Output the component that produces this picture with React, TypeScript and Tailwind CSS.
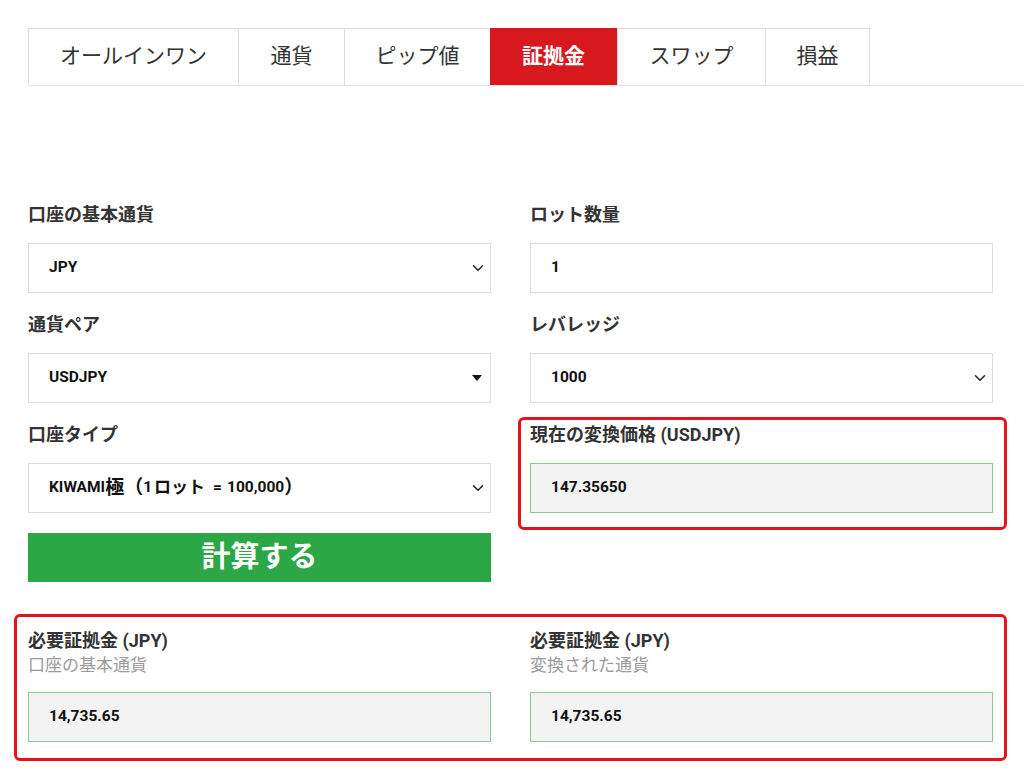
import { ChevronDown } from 'lucide-react';

const tabs = ['オールインワン', '通貨', 'ピップ値', '証拠金', 'スワップ', '損益'];
const tabWidths = ['w-[210px]', 'w-[106px]', 'w-[146px]', 'w-[127px]', 'w-[148px]', 'w-[105px]'];

const font = { fontFamily: 'Roboto, "Noto Sans CJK JP", sans-serif' };

function Label({ children }: { children: React.ReactNode }) {
  return <div className="h-6 mb-4 text-[18px] leading-6 font-bold text-[#333]">{children}</div>;
}

function Box({
  children,
  icon,
  readOnly,
}: {
  children: React.ReactNode;
  icon?: 'chevron' | 'caret';
  readOnly?: boolean;
}) {
  return (
    <div
      className={
        'h-[50px] flex items-center justify-between pl-5 pr-[3px] text-[15.5px] font-bold text-[#111] border ' +
        (readOnly ? 'bg-[#f3f3f3] border-[#8cc796]' : 'bg-white border-[#dcdcdc]')
      }
    >
      <span className="flex items-center">{children}</span>
      {icon === 'chevron' && <ChevronDown size={18} strokeWidth={2} className="text-[#222]" />}
      {icon === 'caret' && (
        <svg width="12" height="8" viewBox="0 0 12 8" className="mr-1">
          <path d="M1 1h10L6 7z" fill="#111" />
        </svg>
      )}
    </div>
  );
}

export default function App() {
  return (
    <div className="bg-white min-h-[777px] pt-7 pl-7" style={font}>
      <div className="flex border-b border-[#e3e3e3]">
        {tabs.map((t, i) => (
          <div
            key={t}
            className={
              'h-[57px] flex items-center justify-center text-[21px] ' +
              tabWidths[i] +
              ' ' +
              (i === 3
                ? 'bg-[#d7191f] text-white font-bold'
                : 'border-t border-l border-[#dddddd] text-[#333] ' + (i === 5 ? 'border-r' : ''))
            }
          >
            {t}
          </div>
        ))}
      </div>

      <div className="w-[965px] mt-[117px] grid grid-cols-2 gap-x-[39px]">
        <div className="flex flex-col">
          <Label>口座の基本通貨</Label>
          <Box icon="chevron">JPY</Box>
          <div className="h-[20px]" />
          <Label>通貨ペア</Label>
          <Box icon="caret">USDJPY</Box>
          <div className="h-[20px]" />
          <Label>口座タイプ</Label>
          <Box icon="chevron">
            KIWAMI<span className="text-[19px]">極</span>
            <span className="text-[19px]">（</span>1
            <span className="text-[17px] ml-[2px] mr-2">ロット</span>=
            <span className="ml-[5px]">100,000</span>
            <span className="text-[19px]">）</span>
          </Box>
          <button className="mt-5 h-[49px] bg-[#2ba746] text-white text-[29px] font-bold flex items-center justify-center">
            計算する
          </button>
        </div>
        <div className="flex flex-col">
          <Label>ロット数量</Label>
          <Box>1</Box>
          <div className="h-[20px]" />
          <Label>レバレッジ</Label>
          <Box icon="chevron">1000</Box>
          <div className="h-[20px]" />
          <div className="relative">
            <Label>現在の変換価格 (USDJPY)</Label>
            <Box readOnly>147.35650</Box>
            <div className="absolute -left-3 -right-[14px] -top-[6px] -bottom-[17px] border-[3px] border-[#e3151c] rounded-[6px] pointer-events-none" />
          </div>
        </div>
      </div>

      <div className="relative w-[965px] mt-[47px] grid grid-cols-2 gap-x-[39px]">
        <div className="absolute -left-[14px] -right-[14px] -top-[15px] -bottom-[19px] border-[3px] border-[#e3151c] rounded-[6px] pointer-events-none" />
        {['口座の基本通貨', '変換された通貨'].map((s) => (
          <div key={s} className="flex flex-col">
            <div className="text-[18px] leading-6 font-bold text-[#333]">必要証拠金 (JPY)</div>
            <div className="text-[17px] leading-6 text-[#9a9a9a] mb-[15px]">{s}</div>
            <Box readOnly>14,735.65</Box>
          </div>
        ))}
      </div>
    </div>
  );
}
